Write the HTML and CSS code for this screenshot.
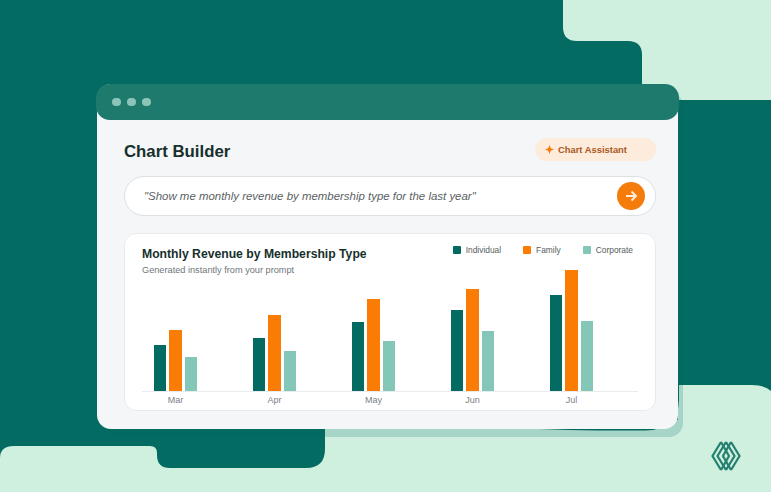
FILE: index.html
```html
<!DOCTYPE html>
<html lang="en">
<head>
    <meta charset="UTF-8">
    <meta name="viewport" content="width=device-width, initial-scale=1.0">
    <title>Chart Builder</title>
    <link rel="stylesheet" href="styles.css">
</head>
<body>
    <!-- Background shapes -->
    <svg class="backdrop" width="771" height="492" viewBox="0 0 771 492">
        <path class="light" d="M563 0V27Q563 41 577 41H628Q642 41 642 55V100H771V0Z"/>
        <path class="light" d="M0 492V458Q0 446 14 446H150Q157 446 157 453V455Q157 468 170 468H306Q325 468 325 449V420H678V385H752Q765 385 771 391V492Z"/>
        <path class="dark" d="M510 428Q580 431 645 430.500Q678 430 679 400V385H510Z"/>
    </svg>

    <!-- Logo -->
    <svg class="logo" width="30" height="32" viewBox="0 0 30 32">
        <path d="M10 2 1.500 16 10 30M15 2 6.500 16 15 30M20 2 12 16l8 14"/>
        <path d="M20 2l8.500 14L20 30M15 2l8.500 14L15 30M10 2l8 14-8 14"/>
    </svg>

    <!-- Window -->
    <div class="window">
        <div class="titlebar">
            <span class="dot"></span>
            <span class="dot"></span>
            <span class="dot"></span>
        </div>

        <div class="content">
            <div class="header">
                <h1>Chart Builder</h1>
                <div class="chip">
                    <svg width="9" height="9" viewBox="0 0 10 10"><path d="M5 0 6.400 3.600 10 5 6.400 6.400 5 10 3.600 6.400 0 5 3.600 3.600Z"/></svg>
                    Chart Assistant
                </div>
            </div>

            <!-- Prompt -->
            <div class="prompt">
                <span class="prompt-text">"Show me monthly revenue by membership type for the last year"</span>
                <span class="send">
                    <svg width="14" height="14" viewBox="0 0 14 14"><path d="M2 7h10M7.500 2.500 12 7l-4.500 4.500"/></svg>
                </span>
            </div>

            <!-- Chart card -->
            <div class="card">
                <div class="card-head">
                    <div>
                        <h2>Monthly Revenue by Membership Type</h2>
                        <p class="sub">Generated instantly from your prompt</p>
                    </div>
                    <div class="legend">
                        <span class="legend-item"><i class="swatch teal"></i>Individual</span>
                        <span class="legend-item"><i class="swatch orange"></i>Family</span>
                        <span class="legend-item"><i class="swatch mint"></i>Corporate</span>
                    </div>
                </div>

                <div class="bars">
                    <div class="group">
                        <div class="bar teal" style="height:46px"></div>
                        <div class="bar orange" style="height:61px"></div>
                        <div class="bar mint" style="height:34px"></div>
                    </div>
                    <div class="group">
                        <div class="bar teal" style="height:53px"></div>
                        <div class="bar orange" style="height:76px"></div>
                        <div class="bar mint" style="height:40px"></div>
                    </div>
                    <div class="group">
                        <div class="bar teal" style="height:69px"></div>
                        <div class="bar orange" style="height:92px"></div>
                        <div class="bar mint" style="height:50px"></div>
                    </div>
                    <div class="group">
                        <div class="bar teal" style="height:81px"></div>
                        <div class="bar orange" style="height:102px"></div>
                        <div class="bar mint" style="height:60px"></div>
                    </div>
                    <div class="group">
                        <div class="bar teal" style="height:96px"></div>
                        <div class="bar orange" style="height:121px"></div>
                        <div class="bar mint" style="height:70px"></div>
                    </div>
                </div>
                <div class="months">
                    <span>Mar</span>
                    <span>Apr</span>
                    <span>May</span>
                    <span>Jun</span>
                    <span>Jul</span>
                </div>
            </div>
        </div>
    </div>
</body>
</html>
```

FILE: styles.css
```css
html, body {
    margin: 0;
    padding: 0;
}
body {
    position: relative;
    width: 771px;
    height: 492px;
    overflow: hidden;
    background-color: #036b62;
    font-family: "Liberation Sans", Arial, sans-serif;
    padding: 84px 0 0 97px;
    box-sizing: border-box;
}
.backdrop {
    position: absolute;
    top: 0;
    left: 0;
}
.light {
    fill: #cfefdf;
}
.dark {
    fill: #036b62;
}
.logo {
    position: absolute;
    left: 711px;
    top: 440px;
}
.logo path {
    fill: none;
    stroke: #25806f;
    stroke-width: 2.200;
}

/* Window */
.window {
    position: relative;
    width: 581px;
    height: 345px;
    background-color: #f4f6f8;
    border-radius: 14px;
    box-shadow: 5px 8px 0 rgba(3, 107, 98, 0.2);
}
.titlebar {
    display: flex;
    align-items: center;
    gap: 6.500px;
    height: 36px;
    margin: 0 -1px;
    padding-left: 16px;
    background-color: #1f7a6e;
    border-radius: 14px;
}
.dot {
    width: 8.500px;
    height: 8.500px;
    border-radius: 50%;
    background-color: #8cc5b8;
}
.content {
    padding: 18px 22px 0 27px;
}
.header {
    display: flex;
    justify-content: space-between;
    align-items: center;
    height: 23px;
}
h1 {
    margin: 4px 0 0;
    font-size: 16.800px;
    color: #17302c;
}
.chip {
    display: flex;
    align-items: center;
    gap: 4px;
    width: 121px;
    height: 23px;
    padding-left: 10px;
    box-sizing: border-box;
    background-color: #fdebdc;
    border-radius: 12px;
    font-size: 9.400px;
    font-weight: bold;
    color: #a9581c;
}
.chip svg {
    fill: #f57c0a;
}

/* Prompt */
.prompt {
    display: flex;
    justify-content: space-between;
    align-items: center;
    height: 40px;
    margin-top: 15px;
    padding: 0 10px 0 19px;
    box-sizing: border-box;
    background-color: #fff;
    border: 1px solid #dde1e5;
    border-radius: 20px;
}
.prompt-text {
    font-size: 11.450px;
    font-style: italic;
    color: #5a5f63;
}
.send {
    display: flex;
    justify-content: center;
    align-items: center;
    width: 28px;
    height: 28px;
    border-radius: 50%;
    background-color: #f57c0a;
}
.send path {
    fill: none;
    stroke: #fdebdc;
    stroke-width: 2;
}

/* Chart card */
.card {
    height: 178px;
    margin-top: 17px;
    padding: 0 17px;
    box-sizing: border-box;
    background-color: #fff;
    border: 1px solid #e8ebee;
    border-radius: 12px;
}
.card-head {
    display: flex;
    justify-content: space-between;
    box-sizing: border-box;
    height: 36px;
    padding-top: 13px;
}
h2 {
    margin: 0;
    font-size: 12.200px;
    color: #17302c;
}
.sub {
    margin: 4px 0 0;
    font-size: 9.200px;
    color: #6f767b;
}
.legend {
    display: flex;
    gap: 22px;
    margin-top: -2px;
    padding-right: 5px;
}
.legend-item {
    display: flex;
    align-items: center;
    gap: 5px;
    height: 10px;
    font-size: 8.400px;
    color: #555c60;
}
.swatch {
    width: 8px;
    height: 8px;
    border-radius: 1px;
}
.bars {
    display: flex;
    align-items: flex-end;
    gap: 56px;
    height: 121px;
    padding-left: 12px;
    border-bottom: 1px solid #e9ecee;
}
.group {
    display: flex;
    align-items: flex-end;
    gap: 3px;
    width: 43px;
}
.bar {
    width: 12.300px;
}
.teal {
    background-color: #036b62;
}
.orange {
    background-color: #fb7c04;
}
.mint {
    background-color: #84c6b8;
}
.months {
    display: flex;
    gap: 56px;
    padding: 3px 0 0 12px;
    font-size: 9px;
    color: #7b8085;
}
.months span {
    width: 43px;
    text-align: center;
}
```
